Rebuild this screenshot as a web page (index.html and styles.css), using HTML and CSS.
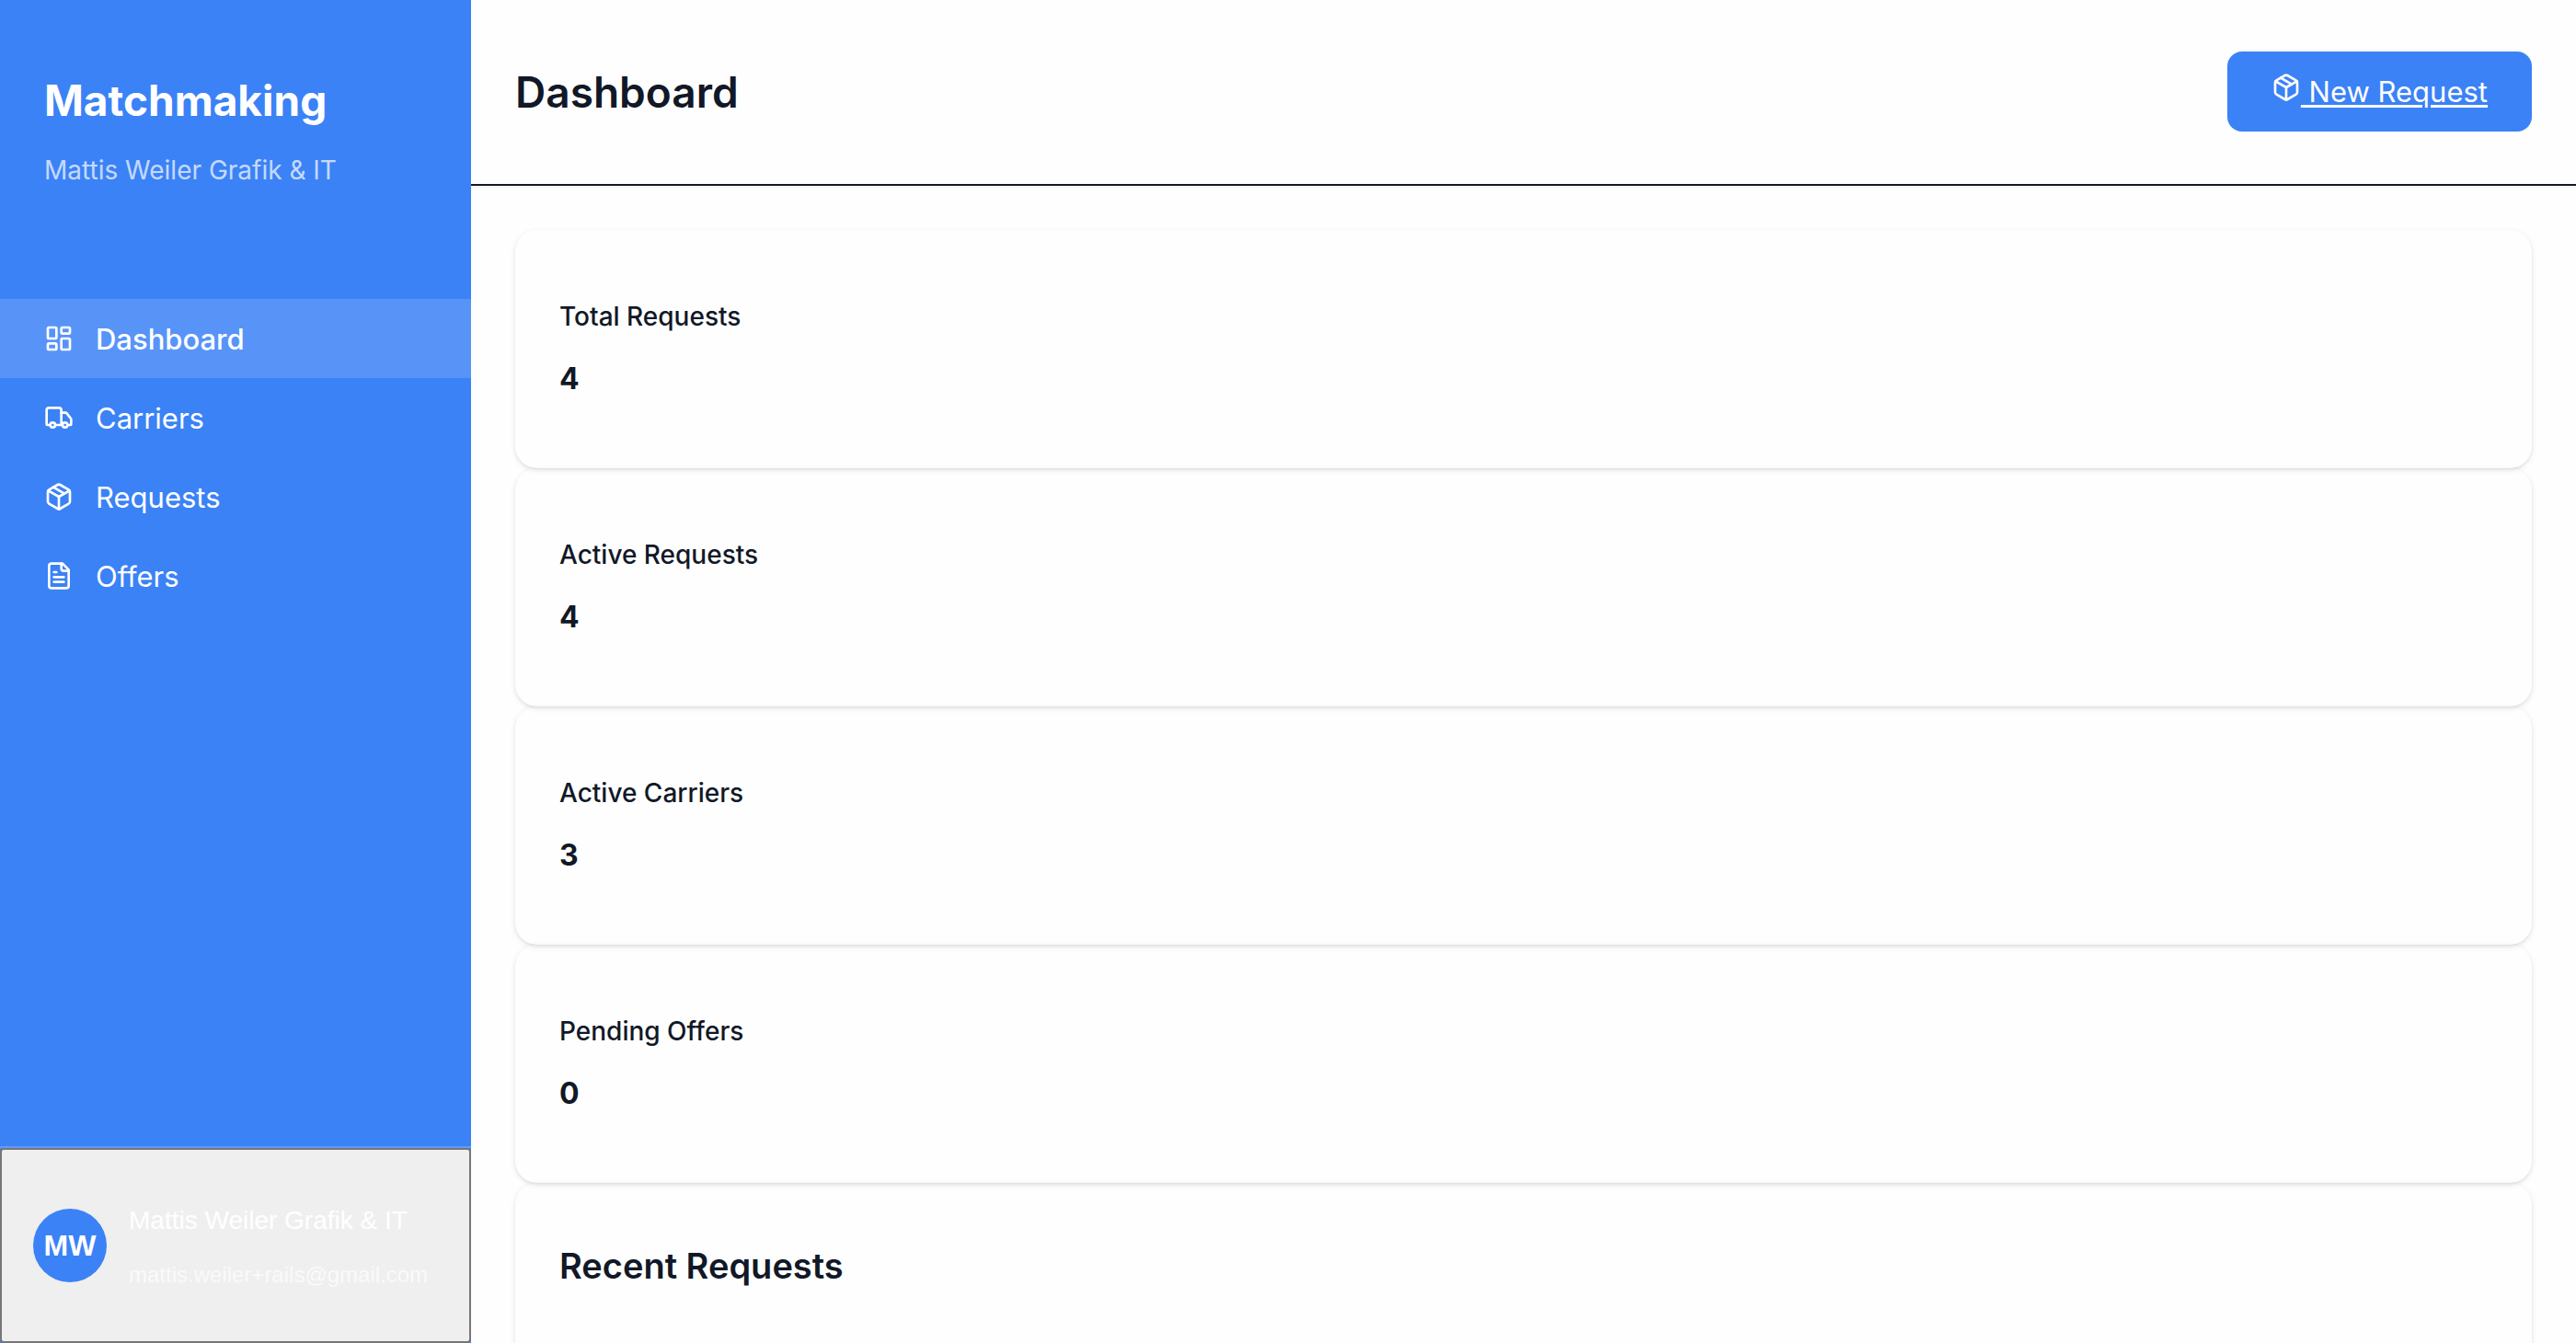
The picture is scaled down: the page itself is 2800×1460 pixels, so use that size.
FILE: index.html
```html
<!DOCTYPE html>
<html lang="en">
<head>
  <meta charset="utf-8">
  <meta name="viewport" content="width=device-width, initial-scale=1">
  <title>Dashboard – Matchmaking</title>
  <link rel="stylesheet" href="styles.css">
</head>
<body>
  <svg class="sprite" aria-hidden="true">
    <symbol id="icon-package" viewBox="0 0 24 24">
      <path d="m7.5 4.27 9 5.15"/>
      <path d="M21 8a2 2 0 0 0-1-1.73l-7-4a2 2 0 0 0-2 0l-7 4A2 2 0 0 0 3 8v8a2 2 0 0 0 1 1.73l7 4a2 2 0 0 0 2 0l7-4A2 2 0 0 0 21 16Z"/>
      <path d="m3.3 7 8.7 5 8.7-5"/>
      <path d="M12 22V12"/>
    </symbol>
  </svg>
  <div class="shell">
    <aside class="sidebar">
      <div class="brand">
        <div class="brand-name">Matchmaking</div>
        <div class="brand-org">Mattis Weiler Grafik &amp; IT</div>
      </div>
      <nav class="nav">
        <a class="nav-link active" href="#dashboard" aria-current="page">
          <svg class="icon" viewBox="0 0 24 24" aria-hidden="true">
            <rect width="7" height="9" x="3" y="3" rx="1"/>
            <rect width="7" height="5" x="14" y="3" rx="1"/>
            <rect width="7" height="9" x="14" y="12" rx="1"/>
            <rect width="7" height="5" x="3" y="16" rx="1"/>
          </svg>
          Dashboard
        </a>
        <a class="nav-link" href="#carriers">
          <svg class="icon" viewBox="0 0 24 24" aria-hidden="true">
            <path d="M14 18V6a2 2 0 0 0-2-2H4a2 2 0 0 0-2 2v11a1 1 0 0 0 1 1h2"/>
            <path d="M15 18H9"/>
            <path d="M19 18h2a1 1 0 0 0 1-1v-3.65a1 1 0 0 0-.22-.624l-3.48-4.35A1 1 0 0 0 17.52 8H14"/>
            <circle cx="17" cy="18" r="2"/>
            <circle cx="7" cy="18" r="2"/>
          </svg>
          Carriers
        </a>
        <a class="nav-link" href="#requests">
          <svg class="icon" aria-hidden="true"><use href="#icon-package"/></svg>
          Requests
        </a>
        <a class="nav-link" href="#offers">
          <svg class="icon" viewBox="0 0 24 24" aria-hidden="true">
            <path d="M15 2H6a2 2 0 0 0-2 2v16a2 2 0 0 0 2 2h12a2 2 0 0 0 2-2V7Z"/>
            <path d="M14 2v4a2 2 0 0 0 2 2h4"/>
            <path d="M10 9H8"/>
            <path d="M16 13H8"/>
            <path d="M16 17H8"/>
          </svg>
          Offers
        </a>
      </nav>
      <div class="account">
        <button class="account-button" type="button">
          <span class="avatar">MW</span>
          <span class="account-text">
            <span class="account-name">Mattis Weiler Grafik &amp; IT</span>
            <span class="account-email">mattis.weiler+rails@gmail.com</span>
          </span>
        </button>
      </div>
    </aside>
    <main class="main">
      <header class="header">
        <h1 class="title">Dashboard</h1>
        <a class="new-request" href="#new-request"><svg class="icon" aria-hidden="true"><use href="#icon-package"/></svg> New Request</a>
      </header>
      <div class="content">
        <section class="card">
          <h2 class="card-label">Total Requests</h2>
          <p class="card-value">4</p>
        </section>
        <section class="card">
          <h2 class="card-label">Active Requests</h2>
          <p class="card-value">4</p>
        </section>
        <section class="card">
          <h2 class="card-label">Active Carriers</h2>
          <p class="card-value">3</p>
        </section>
        <section class="card">
          <h2 class="card-label">Pending Offers</h2>
          <p class="card-value">0</p>
        </section>
        <section class="card recent">
          <h2 class="recent-title">Recent Requests</h2>
        </section>
      </div>
    </main>
  </div>
</body>
</html>
```
FILE: styles.css
```css
:root {
  --blue: #3b82f6;
  --ink: #111827;
}

*,
*::before,
*::after {
  box-sizing: border-box;
}

body {
  margin: 0;
  background: #fefefe;
  color: var(--ink);
  font-family: Inter, "Liberation Sans", sans-serif;
}

h1,
h2,
p {
  margin: 0;
}

.sprite {
  display: none;
}

.shell {
  display: grid;
  grid-template-columns: 512px 1fr;
  height: 100vh;
}

.icon {
  width: 32px;
  height: 32px;
  fill: none;
  stroke: currentColor;
  stroke-width: 2;
  stroke-linecap: round;
  stroke-linejoin: round;
}

/* Sidebar */

.sidebar {
  display: flex;
  flex-direction: column;
  background: var(--blue);
  color: #fff;
}

.brand {
  display: grid;
  gap: 27px;
  padding: 81px 48px 119px;
}

.brand-name {
  font-size: 46px;
  font-weight: 700;
  line-height: 56px;
}

.brand-org {
  font-size: 28px;
  line-height: 42px;
  opacity: 0.7;
}

.nav {
  flex: 1;
}

.nav-link {
  display: flex;
  align-items: center;
  gap: 24px;
  height: 86px;
  padding: 0 48px;
  color: inherit;
  font-size: 31px;
  text-decoration: none;
}

.nav-link.active {
  background: rgba(255, 255, 255, 0.15);
  font-weight: 500;
}

.account {
  border-top: 2px solid rgba(255, 255, 255, 0.2);
}

.account-button {
  display: flex;
  align-items: center;
  gap: 24px;
  width: 100%;
  height: 212px;
  padding: 0 34px;
  border: 2px solid #767676;
  border-radius: 4px;
  background: #efefef;
  color: #fff;
  font-family: "Liberation Sans", Arial, sans-serif;
  text-align: left;
}

.avatar {
  display: grid;
  flex: none;
  place-items: center;
  width: 80px;
  height: 80px;
  border-radius: 50%;
  background: var(--blue);
  font-size: 32px;
  font-weight: 700;
}

.account-text {
  display: grid;
  gap: 20px;
  padding-top: 2px;
}

.account-name {
  font-size: 28px;
  line-height: 42px;
}

.account-email {
  font-size: 24px;
  line-height: 36px;
  opacity: 0.7;
}

/* Main column */

.main {
  overflow: hidden;
}

.header {
  display: flex;
  align-items: center;
  justify-content: space-between;
  padding: 56px 48px 57px;
  border-bottom: 2px solid var(--ink);
  box-shadow: 0 2px 4px rgba(0, 0, 0, 0.05);
}

.title {
  font-size: 46px;
  font-weight: 600;
  line-height: 58px;
}

.new-request {
  padding: 20px 48px;
  border-radius: 16px;
  background: var(--blue);
  color: #fff;
  font-size: 31px;
  line-height: 47px;
  text-decoration: underline 3px;
  text-underline-offset: 3px;
}

.content {
  padding: 48px;
}

.card {
  padding: 73px 48px 73px;
  border-radius: 24px;
  box-shadow: 0 2px 6px rgba(0, 0, 0, 0.1), 0 2px 4px -2px rgba(0, 0, 0, 0.1);
}

.card-label {
  margin-bottom: 23px;
  font-size: 28px;
  font-weight: 500;
  line-height: 42px;
}

.card-value {
  font-size: 32px;
  font-weight: 700;
  line-height: 48px;
}

.recent {
  min-height: 256px;
  padding-top: 62px;
}

.recent-title {
  font-size: 38px;
  font-weight: 600;
  line-height: 56px;
}
```
